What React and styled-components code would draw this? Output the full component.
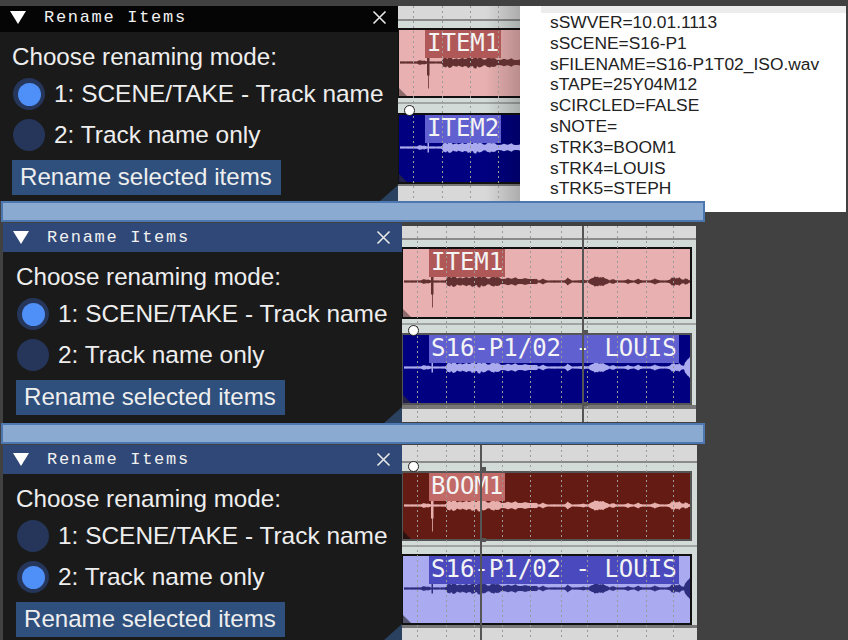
import React from "react";
import styled, { createGlobalStyle } from "styled-components";

const GlobalStyle = createGlobalStyle`
  html, body {
    margin: 0;
    padding: 0;
    background: #414141;
  }
  #root {
    height: 640px;
    overflow: hidden;
  }
`;

const Page = styled.div`
  display: flex;
  flex-direction: column;
  width: 848px;
  height: 640px;
  padding-top: 6px;
  box-sizing: border-box;
  overflow: hidden;
  background: #414141;
`;

const Section = styled.section`
  display: flex;
  align-items: flex-start;
  height: ${(p) => p.$height}px;
  margin-top: ${(p) => p.$top}px;
  padding-left: ${(p) => p.$left}px;
  flex-shrink: 0;
`;

const Divider = styled.div`
  position: relative;
  z-index: 3;
  flex-shrink: 0;
  width: 704px;
  height: 21px;
  margin-left: 1px;
  box-sizing: border-box;
  background: #8aaad2;
  border: 2px solid #4c77b0;
`;

const Panel = styled.div`
  position: relative;
  flex-shrink: 0;
  width: ${(p) => p.$width}px;
  height: 100%;
  overflow: hidden;
  background: #1a1a1a;
  color: #eeeeee;
  font-family: "Liberation Sans", Arial, sans-serif;

  &::after {
    content: "";
    position: absolute;
    right: 0;
    bottom: 0;
    width: 0;
    height: 0;
    border-left: 18px solid transparent;
    border-bottom: 16px solid #2a4260;
  }
`;

/* the top window is cut off by the screenshot, so its bar slides up a little */
const TitleBar = styled.div`
  position: relative;
  height: 29px;
  margin-top: ${(p) => (p.$cropped ? -3 : 0)}px;
  display: flex;
  align-items: center;
  justify-content: space-between;
  padding: 0 11px 0 10px;
  background: ${(p) => (p.$active ? "#2f4877" : "#050505")};
`;

const TitleGroup = styled.div`
  display: flex;
  align-items: center;
  gap: 18px;
`;

const Caret = styled.div`
  width: 0;
  height: 0;
  border-left: 8px solid transparent;
  border-right: 8px solid transparent;
  border-top: 13px solid #ffffff;
`;

const TitleText = styled.span`
  font-family: "Liberation Mono", monospace;
  font-size: 17px;
  letter-spacing: 1.7px;
  white-space: pre;
  color: #f0f0f0;
`;

const PanelBody = styled.div`
  display: flex;
  flex-direction: column;
  align-items: flex-start;
  padding: 8px 12px 0 ${(p) => p.$inset}px;
`;

const Heading = styled.div`
  height: 34px;
  line-height: 34px;
  font-size: 24.2px;
  white-space: nowrap;
  margin-bottom: 4px;
`;

const RadioRow = styled.div`
  display: flex;
  align-items: center;
  gap: 9px;
  height: 32px;
  margin: 0 0 9px 1px;
  font-size: 24.45px;
  white-space: nowrap;
`;

const RadioDot = styled.span`
  display: flex;
  align-items: center;
  justify-content: center;
  width: 32px;
  height: 32px;
  border-radius: 50%;
  background: #25365a;

  &::before {
    content: "";
    display: ${(p) => (p.$checked ? "block" : "none")};
    width: 23px;
    height: 23px;
    border-radius: 50%;
    background: #4f90f8;
  }
`;

const RenameButton = styled.div`
  width: 269px;
  box-sizing: border-box;
  height: 35px;
  line-height: 34px;
  padding: 0 8px;
  background: #2f4f7c;
  font-size: 24.1px;
  white-space: nowrap;
`;

const Timeline = styled.div`
  position: relative;
  flex-shrink: 0;
  display: flex;
  flex-direction: column;
  width: ${(p) => p.$width}px;
  height: ${(p) => p.$height}px;
  margin-top: ${(p) => p.$top}px;
  overflow: hidden;
  background: #d8d8d8;

  &::after {
    content: "";
    display: ${(p) => (p.$shaded ? "block" : "none")};
    position: absolute;
    inset: 0;
    background: linear-gradient(90deg, transparent 72%, rgba(0, 0, 0, 0.2));
  }
`;

const Ruler = styled.div`
  flex-shrink: 0;
  height: ${(p) => p.$height}px;
  border-bottom: 2px solid #8a8a8a;
`;

const Lane = styled.div`
  position: relative;
  flex-shrink: 0;
  padding-top: ${(p) => p.$pad}px;
  padding-bottom: ${(p) => p.$bottom}px;
  background: #d3dbd8;
  border-top: ${(p) => (p.$ruled ? "2px solid #a0a5a3" : "none")};
`;

const EnvelopeDot = styled.span`
  position: absolute;
  z-index: 2;
  left: 6px;
  top: ${(p) => p.$top}px;
  width: 9px;
  height: 9px;
  border-radius: 50%;
  background: #ffffff;
  border: 1px solid #222222;
`;

const Item = styled.div`
  position: relative;
  box-sizing: border-box;
  width: 290px;
  height: ${(p) => p.$height}px;
  overflow: hidden;
  background: ${(p) => p.$bg};
  border: 2px solid ${(p) => (p.$selected ? "#555555" : "#111111")};
  border-left-width: 1px;

  &::after {
    content: "";
    position: absolute;
    left: 0;
    bottom: 0;
    width: 0;
    height: 0;
    border-right: 8px solid transparent;
    border-bottom: 8px solid ${(p) => p.$grip};
  }
`;

const ItemLabel = styled.div`
  position: relative;
  z-index: 1;
  display: inline-block;
  height: 30px;
  line-height: 30px;
  margin: -2px 0 0 26px;
  padding: 0 2px;
  background: ${(p) => p.$bg};
  color: #f4f4f4;
  font-family: "DejaVu Sans Mono", monospace;
  font-size: 24px;
  white-space: pre;
`;

const WaveSvg = styled.svg`
  position: absolute;
  z-index: 1;
  left: 0;
  top: 0;
  width: 288px;
  height: 100%;
`;

const LaneFooter = styled.div`
  flex: 1;
  border-top: ${(p) => p.$line}px solid #777777;
`;

const GridSvg = styled.svg`
  position: absolute;
  z-index: 1;
  inset: 0;
  width: 100%;
  height: 100%;
  pointer-events: none;
`;

const Playhead = styled.div`
  position: absolute;
  z-index: 2;
  top: 0;
  bottom: 0;
  left: ${(p) => p.$x}px;
  width: 2px;
  background: #555555;
`;

const PlayFlag = styled.span`
  position: absolute;
  left: 0;
  top: ${(p) => p.$top}px;
  width: 6px;
  height: 4px;
  background: #555555;
`;

const NotesPanel = styled.div`
  flex-shrink: 0;
  width: 326px;
  height: 206px;
  box-sizing: border-box;
  background: #ffffff;
  padding-left: 21px;
  font-family: "Liberation Sans", Arial, sans-serif;
  font-size: 17.4px;
  color: #222222;
`;

const NotesStrip = styled.div`
  height: 7px;
  background: #ececec;
`;

const NoteLine = styled.div`
  height: 20.8px;
  line-height: 19px;
  padding-left: 9px;
  white-space: nowrap;
`;

const GRID = [15, 44, 72, 100, 128, 159, 185, 215, 244, 271];

const BUMPS = [
  [21, 1.5, 1.5], [25, 1, 1], [46, 3, 1.5], [51, 4, 1.5], [57, 2, 1.5], [63, 2.5, 2], [70, 3.5, 2],
  [76, 5, 1.2], [81, 3, 2], [90, 3, 2], [95, 2.5, 1.5], [105, 1.5, 1.5], [112, 2, 1.5], [122, 1, 1.5],
  [140, 2, 1.5], [165, 3, 1.5], [180, 1, 1.5], [193, 3.5, 3], [200, 2.5, 2], [210, 1.5, 1.5],
  [225, 1.5, 1.5], [235, 2, 1.5], [252, 2, 2], [270, 4, 2], [276, 3.5, 2], [283, 2.5, 1.5],
];

const MID = 32.5;

// same take on every track: the boom has the click at the start, the iso mics a louder tail
function wavePath(iso) {
  const top = [];
  const bottom = [];
  for (let x = 1; x < 288; x++) {
    let amp = 0.8 + Math.abs(Math.sin(x * 1.7)) * 0.5;
    if (x > 43 && x < 135) amp += 1.4;
    if (x > 186 && x < 206) amp += 1;
    for (const [c, a, w] of BUMPS) {
      amp += a * Math.exp(-((x - c) ** 2) / (2 * w * w)) * (0.8 + 0.2 * Math.sin(x * 2.3));
    }
    if (iso && x > 281) amp += (x - 281) * 1.6;
    top.push(`${x},${(MID - amp).toFixed(1)}`);
    bottom.push(`${x},${(MID + amp).toFixed(1)}`);
  }
  const body = `M${top.join("L")}L${bottom.reverse().join("L")}Z`;
  if (iso) return `${body}M28.5 ${MID - 5}h1.5v10h-1.5Z`;
  return `${body}M28 ${MID - 5}h2.5v18h-2.5ZM29 ${MID}h0.8v26h-0.8Z`;
}

function TrackItem({ label, height, bg, labelBg, wave, grip, selected, iso }) {
  return (
    <Item $height={height} $bg={bg} $grip={grip} $selected={selected}>
      <WaveSvg viewBox={`0 0 288 ${height - 4}`} preserveAspectRatio="none">
        <path d={wavePath(iso)} fill={wave} />
      </WaveSvg>
      <ItemLabel $bg={labelBg}>{label}</ItemLabel>
    </Item>
  );
}

function RenamePanel({ width, cropped, active, mode }) {
  return (
    <Panel $width={width}>
      <TitleBar $cropped={cropped} $active={active}>
        <TitleGroup>
          <Caret />
          <TitleText>Rename Items</TitleText>
        </TitleGroup>
        <svg width="15" height="15" viewBox="0 0 15 15">
          <path d="M1.5 1.5L13.5 13.5M13.5 1.5L1.5 13.5" stroke="#e8e8e8" strokeWidth="1.6" />
        </svg>
      </TitleBar>
      <PanelBody $inset={cropped ? 12 : 13}>
        <Heading>Choose renaming mode:</Heading>
        <RadioRow>
          <RadioDot $checked={mode === 1} />
          1: SCENE/TAKE - Track name
        </RadioRow>
        <RadioRow>
          <RadioDot $checked={mode === 2} />
          2: Track name only
        </RadioRow>
        <RenameButton>Rename selected items</RenameButton>
      </PanelBody>
    </Panel>
  );
}

function TrackView({ width, height, top, shaded, ruler, lanes, footer, playhead }) {
  return (
    <Timeline $width={width} $height={height} $top={top} $shaded={shaded}>
      <Ruler $height={ruler} />
      {lanes.map((lane) => (
        <Lane key={lane.item.label + lane.pad} $pad={lane.pad} $bottom={lane.bottom} $ruled={lane.ruled}>
          {lane.dot !== undefined && <EnvelopeDot $top={lane.dot} />}
          <TrackItem {...lane.item} />
        </Lane>
      ))}
      <LaneFooter $line={footer} />
      <GridSvg>
        {GRID.map((x) => (
          <line key={x} x1={x + 0.5} x2={x + 0.5} y1="0" y2="100%" stroke="#9a9a9a" strokeDasharray="2 3" />
        ))}
      </GridSvg>
      {playhead && (
        <Playhead $x={playhead.x}>
          {playhead.flags.map((f) => (
            <PlayFlag key={f} $top={f} />
          ))}
        </Playhead>
      )}
    </Timeline>
  );
}

const NOTES = [
  "sSWVER=10.01.1113",
  "sSCENE=S16-P1",
  "sFILENAME=S16-P1T02_ISO.wav",
  "sTAPE=25Y04M12",
  "sCIRCLED=FALSE",
  "sNOTE=",
  "sTRK3=BOOM1",
  "sTRK4=LOUIS",
  "sTRK5=STEPH",
];

const pink = { bg: "#e8b0b0", labelBg: "#b05858", wave: "#623030", grip: "#8a6a6a" };
const navy = { bg: "#000080", labelBg: "#6060d0", wave: "#aaaaee", grip: "#20204a", iso: true };
const brown = { bg: "#641b14", labelBg: "#c26a68", wave: "#e8b0ac", grip: "#2a1210" };
const lilac = { bg: "#aaaaf0", labelBg: "#4a4abe", wave: "#2e2e80", grip: "#555570", iso: true };

export default function App() {
  return (
    <Page>
      <GlobalStyle />
      <Section $height={195} $top={0} $left={0}>
        <RenamePanel width={398} cropped mode={1} />
        <TrackView
          width={122}
          height={195}
          top={0}
          shaded
          ruler={13}
          footer={2}
          lanes={[
            { pad: 7, bottom: 4, item: { ...pink, label: "ITEM1", height: 70 } },
            { pad: 9, bottom: 0, ruled: true, dot: 1, item: { ...navy, label: "ITEM2", height: 71 } },
          ]}
        />
        <NotesPanel>
          <NotesStrip />
          {NOTES.map((line) => (
            <NoteLine key={line}>{line}</NoteLine>
          ))}
        </NotesPanel>
      </Section>
      <Divider />
      <Section $height={200} $top={1} $left={3}>
        <RenamePanel width={399} active mode={1} />
        <TrackView
          width={294}
          height={196}
          top={3}
          ruler={12}
          footer={4}
          playhead={{ x: 180, flags: [104, 176] }}
          lanes={[
            { pad: 7, bottom: 4, item: { ...pink, label: "ITEM1", height: 72 } },
            { pad: 8, bottom: 0, ruled: true, dot: 0, item: { ...navy, label: "S16-P1/02 - LOUIS", height: 72, selected: true } },
          ]}
        />
      </Section>
      <Divider />
      <Section $height={195} $top={1} $left={3}>
        <RenamePanel width={399} active mode={2} />
        <TrackView
          width={295}
          height={195}
          top={0}
          ruler={16}
          footer={3}
          playhead={{ x: 78, flags: [22, 93] }}
          lanes={[
            { pad: 8, bottom: 4, dot: -2, item: { ...brown, label: "BOOM1", height: 70, selected: true } },
            { pad: 7, bottom: 0, ruled: true, item: { ...lilac, label: "S16-P1/02 - LOUIS", height: 71 } },
          ]}
        />
      </Section>
    </Page>
  );
}
